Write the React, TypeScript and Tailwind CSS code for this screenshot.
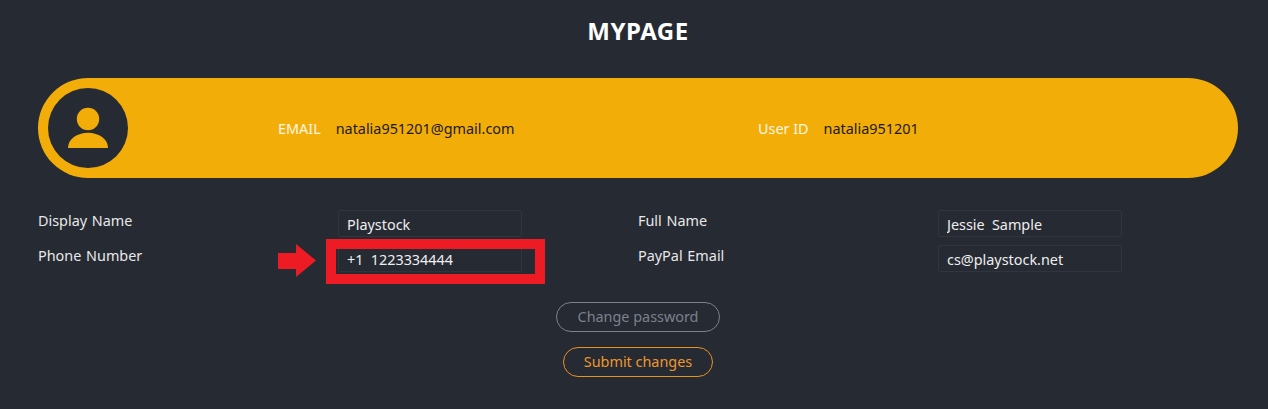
const labelClass = 'pt-[1px] text-[14.4px] leading-[20px] text-[#e8e8e8] [word-spacing:1px]';
const inputClass =
  'h-[27px] w-[184px] rounded-[2px] border border-[#31353e] bg-transparent px-2 pt-[1px] text-[14.4px] text-[#eeeeee] outline-none [word-spacing:3.5px]';

function UserIcon() {
  return (
    <svg viewBox="0 0 80 80" className="h-20 w-20">
      <circle cx="40" cy="40" r="40" fill="#262a33" />
      <circle cx="40" cy="31" r="11.2" fill="#f2ad08" />
      <path d="M20 60C20 51 29 44.7 40 44.7C51 44.7 60 51 60 60Z" fill="#f2ad08" />
    </svg>
  );
}

function Field({ label, value }: { label: string; value: string }) {
  return (
    <>
      <div className={labelClass}>{label}</div>
      <div>
        <input className={inputClass} defaultValue={value} readOnly />
      </div>
    </>
  );
}

export default function App() {
  return (
    <div className="relative h-[409px] w-[1268px] overflow-hidden bg-[#262a33] pr-[30px] pl-[38px] font-['Noto_Sans',sans-serif] text-white">
      <h1 className="pt-[16px] pb-[32px] text-center font-['Noto_Sans',sans-serif] text-[24px] leading-[30px] font-bold tracking-[0.5px]">
        MYPAGE
      </h1>

      {/* yellow profile bar */}
      <div className="flex h-[100px] items-center rounded-full bg-[#f2ad08] pl-[10px] text-[14.4px]">
        <UserIcon />
        <div className="ml-[150px] flex w-[480px] gap-[15px] pt-[1px]">
          <span className="text-[#fff8e6]">EMAIL</span>
          <span className="text-[#1d1a12]">natalia951201@gmail.com</span>
        </div>
        <div className="flex gap-[15px] pt-[1px]">
          <span className="text-[#fff8e6]">User ID</span>
          <span className="text-[#1d1a12]">natalia951201</span>
        </div>
      </div>

      <div className="mt-[32px] grid grid-cols-[300px_300px_300px_300px] gap-y-[8px]">
        <Field label="Display Name" value="Playstock" />
        <Field label="Full Name" value="Jessie Sample" />
        <Field label="Phone Number" value="+1 1223334444" />
        <Field label="PayPal Email" value="cs@playstock.net" />
      </div>

      <div className="mt-[30px] flex flex-col items-center gap-[15px] text-[14.4px]">
        <button className="h-[30px] w-[164px] rounded-full border border-[#7c818b] text-[#7c818b]">
          Change password
        </button>
        <button className="h-[30px] w-[150px] rounded-full border border-[#e8921f] text-[#f0962a]">
          Submit changes
        </button>
      </div>

      {/* red annotation over the phone field */}
      <div className="absolute top-[239px] left-[326px] h-[45px] w-[219px] border-[10px] border-[#ed1c24]" />
      <svg viewBox="0 0 38 33" className="absolute top-[244px] left-[278px] h-[33px] w-[38px]">
        <path d="M0 9H18V0L38 16.5L18 33V25H0Z" fill="#ed1c24" />
      </svg>
    </div>
  );
}
